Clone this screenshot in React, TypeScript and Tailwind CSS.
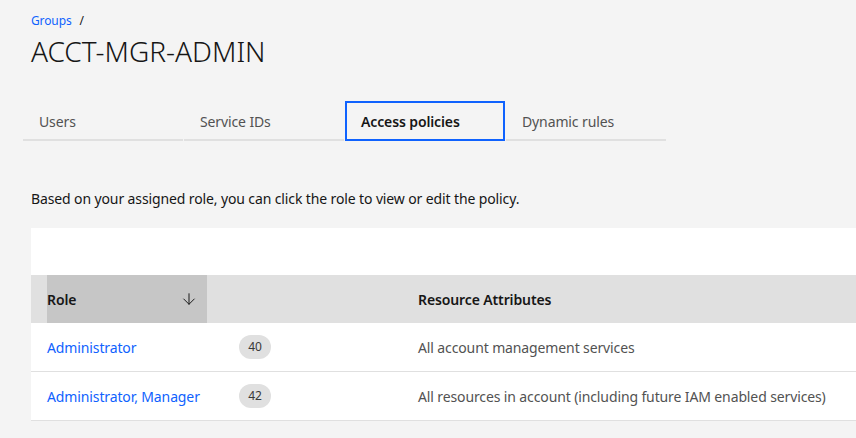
import { ArrowDown } from 'lucide-react'

const tabs = ['Users', 'Service IDs', 'Access policies', 'Dynamic rules']

const policies = [
  { role: 'Administrator', count: 40, resource: 'All account management services' },
  { role: 'Administrator, Manager', count: 42, resource: 'All resources in account (including future IAM enabled services)' },
]

export default function App() {
  return (
    <div className="min-h-screen w-[856px] overflow-hidden bg-[#f4f4f4] text-[#161616] tracking-[-0.12px] font-['Noto_Sans',sans-serif]">
      {/* Header */}
      <div className="pl-[31px] pt-[13px]">
        <div className="flex items-center gap-2 text-[12px] leading-[16px]">
          <span className="text-[#0f62fe]">Groups</span>
          <span className="text-[#161616]">/</span>
        </div>
        <h1 className="mt-[4px] text-[28px] leading-[36px] font-light tracking-normal text-[#161616]">ACCT-MGR-ADMIN</h1>
      </div>

      {/* Tabs */}
      <div className="mt-[32px] pl-[23px] flex gap-px">
        {tabs.map((t) => {
          const active = t === 'Access policies'
          return (
            <div
              key={t}
              className={
                active
                  ? 'w-[160px] h-[40px] flex items-center px-[14px] border-2 border-[#0f62fe] text-[14px] font-semibold text-[#161616]'
                  : 'w-[160px] h-[40px] flex items-center px-4 pt-[2px] border-b-2 border-[#e0e0e0] text-[14px] text-[#525252]'
              }
            >
              {t}
            </div>
          )
        })}
      </div>

      {/* Description */}
      <p className="mt-[49px] pl-[31px] text-[14px] leading-[18px] text-[#161616]">
        Based on your assigned role, you can click the role to view or edit the policy.
      </p>

      {/* Table */}
      <div className="mt-[20px] ml-[31px] bg-white w-[900px]">
        <div className="h-[47px]" />
        <div className="grid grid-cols-[176px_195px_1fr] h-[48px] bg-[#e0e0e0] text-[14px] font-semibold text-[#161616]">
          <div className="pl-4 flex">
            <div className="w-[160px] bg-[#c6c6c6] flex items-center justify-between pr-[9px]">
              <span>Role</span>
              <ArrowDown className="w-[18px] h-[18px] text-[#161616]" strokeWidth={1.3} />
            </div>
          </div>
          <div />
          <div className="pl-4 flex items-center">Resource Attributes</div>
        </div>
        {policies.map((p) => (
          <div
            key={p.role}
            className="grid grid-cols-[176px_195px_1fr] h-[49px] border-b border-[#e0e0e0] text-[14px] items-center"
          >
            <div className="pl-4 text-[#0f62fe] whitespace-nowrap">{p.role}</div>
            <div className="pl-8">
              <span className="inline-flex items-center justify-center w-[32px] h-[24px] rounded-full bg-[#e0e0e0] text-[12px] text-[#393939]">
                {p.count}
              </span>
            </div>
            <div className="pl-4 text-[#525252] whitespace-nowrap">{p.resource}</div>
          </div>
        ))}
      </div>
    </div>
  )
}
